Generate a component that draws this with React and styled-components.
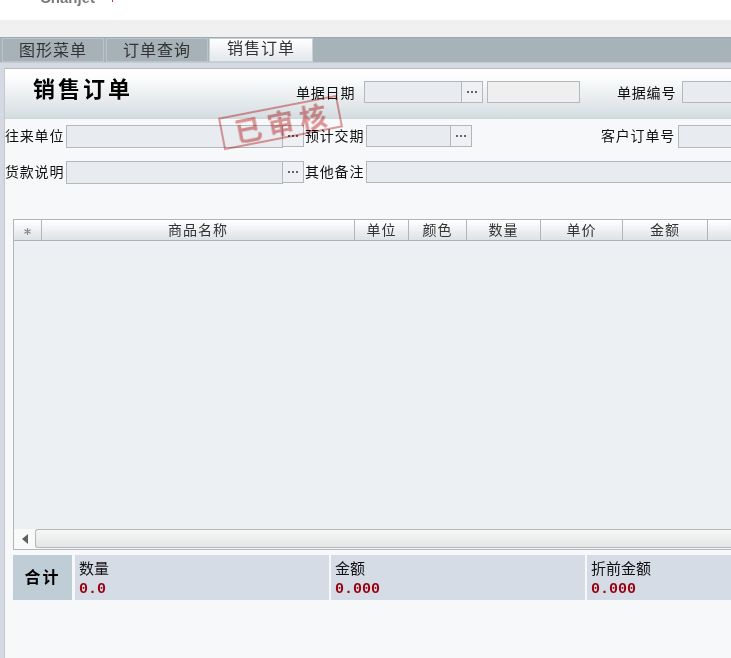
import React from "react";
import styled, { createGlobalStyle } from "styled-components";

const GlobalStyle = createGlobalStyle`
  html, body {
    margin: 0;
    padding: 0;
    background: #fff;
    overflow: hidden;
    font-family: "Noto Sans CJK SC", "Liberation Sans", sans-serif;
    font-size: 14px;
    color: #111;
  }
`;

const Page = styled.div`
  width: 731px;
  height: 658px;
  display: flex;
  flex-direction: column;
  overflow: hidden;
`;

const LogoBar = styled.div`
  height: 20px;
  flex: none;
  background: #fff;
  overflow: hidden;
  display: flex;
  align-items: flex-start;
  padding-left: 40px;
`;

const LogoText = styled.span`
  font-family: "Liberation Sans", sans-serif;
  font-weight: bold;
  font-size: 15px;
  line-height: 16px;
  margin-top: -10px;
  color: #77797b;
`;

const LogoDot = styled.span`
  width: 1px;
  height: 2px;
  margin-left: 17px;
  background: #e8202a;
`;

const GapBar = styled.div`
  height: 17px;
  flex: none;
  background: #f0f0f0;
`;

const TabBar = styled.div`
  height: 26px;
  flex: none;
  box-sizing: border-box;
  background: #a8b3b9;
  border-top: 1px solid #9ea9af;
  border-bottom: 1px solid #c3cad0;
  display: flex;
  padding-left: 2px;
  gap: 2px;
`;

const Tab = styled.div`
  width: ${props => props.$width}px;
  height: 24px;
  margin-left: ${props => (props.$active ? "-1px" : "0")};
  box-sizing: border-box;
  text-align: center;
  font-size: 16px;
  letter-spacing: 1px;
  line-height: ${props => (props.$active ? "16px" : "20px")};
  color: #333;
  border: 1px solid ${props => (props.$active ? "#c9d2d8" : "#b9c3c9")};
  background: ${props => (props.$active ? "linear-gradient(#ffffff, #e2e7eb)" : "#a6b1b8")};
`;

const Workspace = styled.div`
  flex: 1;
  min-height: 0;
  display: flex;
  flex-direction: column;
  background: #d5d9e1;
  padding: 5px 0 0 4px;
`;

const Panel = styled.div`
  position: relative;
  flex: 1;
  min-height: 0;
  overflow: hidden;
  background: #f7f8fa;
  border-top: 1px solid #b5bcc2;
  border-left: 1px solid #c4c9cf;
`;

const TitleBar = styled.div`
  height: 50px;
  box-sizing: border-box;
  display: flex;
  align-items: flex-start;
  padding: 12px 0 0 28px;
  background: linear-gradient(#ffffff 10%, #d6dee2 96%, #d2d9dd 96%);
`;

const Title = styled.h1`
  margin: -9px 0 0;
  width: 263px;
  flex: none;
  font-size: 22px;
  line-height: 30px;
  letter-spacing: 3px;
  font-weight: bold;
  color: #000;
`;

const Label = styled.span`
  flex: none;
  width: ${props => props.$width}px;
  margin-left: ${props => props.$left || 0}px;
  letter-spacing: 0.8px;
  line-height: ${props => props.$line || 20}px;
  white-space: nowrap;
  color: #111;
`;

const Input = styled.div`
  flex: none;
  width: ${props => props.$width}px;
  height: ${props => props.$height || 22}px;
  margin-left: ${props => props.$left || 0}px;
  box-sizing: border-box;
  background: ${props => props.$bg || "#e8ebef"};
  border: 1px solid #b4b8bd;
`;

const DotsButton = styled.div`
  flex: none;
  width: 22px;
  height: ${props => props.$height || 22}px;
  box-sizing: border-box;
  margin-left: -1px;
  background: #eef0f3;
  border: 1px solid #b4b8bd;
  display: flex;
  align-items: center;
  justify-content: center;
  gap: 2px;
`;

const Dot = styled.i`
  width: 2px;
  height: 2px;
  background: #5f656b;
`;

const FormRow = styled.div`
  display: flex;
  align-items: flex-start;
  height: 23px;
  margin-top: ${props => props.$top}px;
`;

const Grid = styled.div`
  margin: 35px 0 0 8px;
  height: 331px;
  box-sizing: border-box;
  display: flex;
  flex-direction: column;
  background: #edf0f3;
  border-top: 1px solid #b0b5bc;
  border-left: 1px solid #b0b5bc;
  border-bottom: 1px solid #b0b5bc;
`;

const GridHeader = styled.div`
  display: flex;
  flex: none;
  height: 21px;
  box-sizing: border-box;
  border-bottom: 1px solid #acb2b9;
  background: linear-gradient(#ffffff, #dde2e6);
`;

const HeadCell = styled.div`
  flex: none;
  width: ${props => props.$width}px;
  box-sizing: border-box;
  border-right: 1px solid #b0b5bc;
  text-align: center;
  font-size: 14px;
  letter-spacing: 1px;
  line-height: 19px;
  color: #333;
`;

const StarSvg = styled.svg`
  width: 7px;
  height: 7px;
`;

const GridBody = styled.div`
  flex: 1;
`;

const ScrollBar = styled.div`
  flex: none;
  height: 20px;
  box-sizing: border-box;
  padding-bottom: 1px;
  display: flex;
  background: #f8f9f9;
`;

const ArrowButton = styled.div`
  flex: none;
  width: 21px;
  display: flex;
  align-items: center;
  justify-content: center;
`;

const Thumb = styled.div`
  flex: 1;
  border: 1px solid #b5b7b9;
  border-right: none;
  border-radius: 3px 0 0 3px;
  background: linear-gradient(#f5f6f5, #e4e6e6);
`;

const Totals = styled.div`
  margin: 5px 0 0 8px;
  height: 45px;
  display: flex;
`;

const TotalsHead = styled.div`
  flex: none;
  width: 59px;
  margin-right: 3px;
  background: #bfcdd6;
  font-size: 16px;
  font-weight: bold;
  letter-spacing: 2px;
  text-align: center;
  line-height: 43px;
  color: #000;
`;

const TotalCell = styled.div`
  flex: none;
  width: ${props => props.$width}px;
  margin-right: 2px;
  padding-left: 4px;
  box-sizing: border-box;
  background: #d5dce6;
`;

const TotalName = styled.div`
  font-size: 15px;
  line-height: 20px;
  margin-top: 3px;
  color: #111;
`;

const TotalValue = styled.div`
  font-family: "Liberation Mono", monospace;
  font-weight: bold;
  font-size: 15px;
  line-height: 18px;
  margin-top: 3px;
  color: #990011;
`;

const Stamp = styled.div`
  position: absolute;
  left: 215px;
  top: 37px;
  width: 121px;
  height: 33px;
  box-sizing: border-box;
  transform: rotate(-11deg);
  border: 2px solid #e29090;
  display: flex;
  align-items: center;
  justify-content: center;
  gap: 6px;
  font-size: 27px;
  font-weight: bold;
  line-height: 29px;
  color: #e08a8a;
  opacity: 0.9;
  filter: blur(0.4px);
  mix-blend-mode: multiply;
`;

const columns = [
  { width: 28, star: true },
  { width: 313, name: "商品名称" },
  { width: 54, name: "单位" },
  { width: 58, name: "颜色" },
  { width: 74, name: "数量" },
  { width: 82, name: "单价" },
  { width: 85, name: "金额" },
  { width: 60 },
];

const totals = [
  { name: "数量", value: "0.0", width: 254 },
  { name: "金额", value: "0.000", width: 254 },
  { name: "折前金额", value: "0.000", width: 200 },
];

function Dots({ height }) {
  return (
    <DotsButton $height={height}>
      <Dot />
      <Dot />
      <Dot />
    </DotsButton>
  );
}

function StarIcon() {
  return (
    <StarSvg viewBox="0 0 8 8">
      <path d="M4 0V8M0.5 2L7.5 6M7.5 2L0.5 6" stroke="#7f858c" strokeWidth="1.2" fill="none" />
    </StarSvg>
  );
}

export default function App() {
  return (
    <Page>
      <GlobalStyle />
      <LogoBar>
        <LogoText>Chanjet</LogoText>
        <LogoDot />
      </LogoBar>
      <GapBar />
      <TabBar>
        <Tab $width={102}>图形菜单</Tab>
        <Tab $width={102}>订单查询</Tab>
        <Tab $width={104} $active>销售订单</Tab>
      </TabBar>
      <Workspace>
        <Panel>
          <TitleBar>
            <Title>销售订单</Title>
            <Label $width={68} $line={22}>单据日期</Label>
            <Input $width={98} />
            <Dots />
            <Input $width={93} $left={4} $bg="#efefef" />
            <Label $width={65} $left={37} $line={22}>单据编号</Label>
            <Input $width={60} />
          </TitleBar>
          <FormRow $top={6}>
            <Label $width={61}>往来单位</Label>
            <Input $width={217} $height={23} />
            <Dots $height={23} />
            <Label $width={61} $left={1}>预计交期</Label>
            <Input $width={85} />
            <Dots />
            <Label $width={77} $left={129}>客户订单号</Label>
            <Input $width={60} $height={23} />
          </FormRow>
          <FormRow $top={13}>
            <Label $width={61}>货款说明</Label>
            <Input $width={217} $height={23} />
            <Dots $height={23} />
            <Label $width={61} $left={1}>其他备注</Label>
            <Input $width={370} $height={22} />
          </FormRow>
          <Grid>
            <GridHeader>
              {columns.map((col, i) => (
                <HeadCell key={i} $width={col.width}>
                  {col.star ? <StarIcon /> : col.name}
                </HeadCell>
              ))}
            </GridHeader>
            <GridBody />
            <ScrollBar>
              <ArrowButton>
                <svg width="6" height="10" viewBox="0 0 6 10">
                  <path d="M6 0V10L0 5Z" fill="#5e6063" />
                </svg>
              </ArrowButton>
              <Thumb />
            </ScrollBar>
          </Grid>
          <Totals>
            <TotalsHead>合计</TotalsHead>
            {totals.map(t => (
              <TotalCell key={t.name} $width={t.width}>
                <TotalName>{t.name}</TotalName>
                <TotalValue>{t.value}</TotalValue>
              </TotalCell>
            ))}
          </Totals>
          <Stamp>
            <span>已</span>
            <span>审</span>
            <span>核</span>
          </Stamp>
        </Panel>
      </Workspace>
    </Page>
  );
}
